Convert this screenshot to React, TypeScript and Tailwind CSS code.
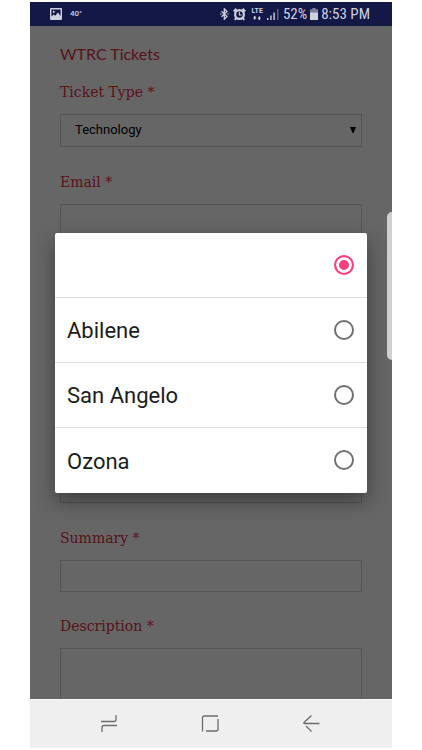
import { useState } from "react";
import type { ReactNode } from "react";

const LOCATIONS = ["", "Abilene", "San Angelo", "Ozona"];

const controlClass =
  "block w-full rounded-none border border-[#d4d4d4] bg-white outline-none";

interface FieldProps {
  id: string;
  label: string;
  className?: string;
  children: ReactNode;
}

function Field({ id, label, className, children }: FieldProps) {
  return (
    <div className={className}>
      <label
        htmlFor={id}
        className="mb-3 block font-['DejaVu_Serif',serif] text-sm leading-5 text-[#dc3048]"
      >
        {label} <span className="text-[#f02840]">*</span>
      </label>
      {children}
    </div>
  );
}

function PictureIcon() {
  return (
    <svg width="12" height="12" viewBox="0 0 12 12" aria-hidden="true">
      <path
        fillRule="evenodd"
        fill="currentColor"
        d="M1 0h10a1 1 0 0 1 1 1v10a1 1 0 0 1-1 1H1a1 1 0 0 1-1-1V1a1 1 0 0 1 1-1ZM1.4 1.4v7.2L3.6 6.4l1.7 1.4 2.6-3.3 2.7 3.5V1.4Z"
      />
      <circle cx="3.8" cy="3.8" r="1.1" fill="currentColor" />
    </svg>
  );
}

function BluetoothIcon() {
  return (
    <svg width="9" height="12" viewBox="0 0 9 12" fill="none" aria-hidden="true">
      <path
        d="M1.5 3.3 7 8.5 4.3 11.2V.8L7 3.5 1.5 8.7"
        stroke="currentColor"
        strokeWidth="1.3"
      />
      <path d="M0 6h1.5M7.4 6h1.4" stroke="currentColor" strokeWidth="1.2" />
    </svg>
  );
}

function AlarmIcon() {
  return (
    <svg width="13" height="13" viewBox="0 0 13 13" fill="none" aria-hidden="true">
      <circle cx="6.5" cy="6.5" r="4.4" stroke="currentColor" strokeWidth="2.2" />
      <path
        d="M.7 3.4 3.4.8M12.3 3.4 9.6.8M3.2 10.2 1.8 12M9.8 10.2l1.4 1.8"
        stroke="currentColor"
        strokeWidth="2"
      />
      <path d="M6.4 4v3h2.2" stroke="currentColor" strokeWidth="1.1" />
    </svg>
  );
}

function DataArrowsIcon() {
  return (
    <svg width="8" height="4" viewBox="0 0 8 4" fill="currentColor" aria-hidden="true">
      <path d="M0 1.4h1V0h1.4v1.4h1L1.7 4ZM4.6 2.6h1V4H7V2.6h1L6.3 0Z" />
    </svg>
  );
}

function SignalIcon() {
  return (
    <svg width="12" height="11" viewBox="0 0 12 11" fill="currentColor" aria-hidden="true">
      <path d="M0 9h1.4v2H0ZM3.2 6.5h1.4V11H3.2ZM6.4 3.5h1.4V11H6.4Z" />
      <path d="M10 0h1.4v11H10Z" opacity=".4" />
    </svg>
  );
}

function BatteryIcon() {
  return (
    <svg width="8" height="12" viewBox="0 0 8 12" fill="currentColor" aria-hidden="true">
      <path d="M2.3 0h3.4v1.3H8V5H0V1.3h2.3Z" opacity=".55" />
      <path d="M0 4.6h8V12H0Z" />
    </svg>
  );
}

function StatusBar() {
  return (
    <header className="flex h-6 items-center justify-between bg-[#141846] pr-[22px] pl-5 font-[Roboto,sans-serif] text-[#cfd1e0]">
      <div className="flex items-center gap-2">
        <PictureIcon />
        <span className="text-[8px] leading-3 font-medium">40°</span>
      </div>
      <div className="flex items-center gap-1">
        <BluetoothIcon />
        <AlarmIcon />
        <div className="ml-0.5 flex flex-col items-center gap-px">
          <span className="text-[7px] leading-[7px] font-bold">LTE</span>
          <DataArrowsIcon />
        </div>
        <SignalIcon />
        <div className="flex items-center gap-[3px] font-['Roboto_Condensed',Roboto,sans-serif] text-[15px] leading-5">
          <span>52%</span>
          <BatteryIcon />
          <span>8:53 PM</span>
        </div>
      </div>
    </header>
  );
}

function TicketForm() {
  return (
    <form className="flex flex-1 flex-col px-[30px] pt-4">
      <h1 className="mb-4 font-[Lato,sans-serif] text-base leading-6 text-[#dc3048]">
        WTRC Tickets
      </h1>
      <Field id="ticket-type" label="Ticket Type" className="mb-[25px]">
        <div className="relative">
          <select
            id="ticket-type"
            className={`${controlClass} h-[33px] appearance-none px-[14px] pb-0.5 font-[Roboto,sans-serif] text-[13px] text-black`}
          >
            <option>Technology</option>
          </select>
          <svg
            className="pointer-events-none absolute top-3 right-1.5"
            width="6"
            height="7"
            viewBox="0 0 6 7"
            aria-hidden="true"
          >
            <path d="M0 1h6L3.5 7h-1Z" />
          </svg>
        </div>
      </Field>
      <Field id="email" label="Email">
        <input id="email" type="email" className={`${controlClass} h-[33px] px-3`} />
      </Field>
      <select
        aria-label="Location"
        className={`${controlClass} mt-[233px] mb-[25px] h-[33px] appearance-none px-3`}
      >
        {LOCATIONS.map((name) => (
          <option key={name}>{name}</option>
        ))}
      </select>
      <Field id="summary" label="Summary" className="mb-6">
        <input id="summary" type="text" className={`${controlClass} h-8 px-3`} />
      </Field>
      <Field id="description" label="Description" className="flex flex-1 flex-col">
        <textarea
          id="description"
          className={`${controlClass} min-h-12 flex-1 resize-none border-b-0 px-3`}
        />
      </Field>
    </form>
  );
}

function LocationDialog() {
  const [selected, setSelected] = useState("");

  return (
    <div className="absolute inset-0 flex items-center bg-black/60 px-[25px]">
      <div
        role="dialog"
        aria-modal="true"
        aria-label="Location"
        className="w-full divide-y divide-[#dedede] rounded-xs bg-white shadow-[0_8px_20px_rgba(0,0,0,0.4)]"
      >
        {LOCATIONS.map((name) => (
          <label
            key={name}
            className="flex h-[65px] items-center justify-between px-3 pr-[13px] font-[Roboto,sans-serif] text-[22px] leading-7 text-[#1c1c1c]"
          >
            <span className="pt-[3px]">{name}</span>
            <input
              type="radio"
              name="location"
              aria-label={name || "None"}
              checked={selected === name}
              onChange={() => setSelected(name)}
              className="size-5 appearance-none rounded-full border-2 border-[#707070] bg-white checked:border-[#f93f7c] checked:bg-[#f93f7c] checked:shadow-[inset_0_0_0_3px_white]"
            />
          </label>
        ))}
      </div>
      <div className="absolute top-[186px] right-0 h-[148px] w-[5px] rounded-l-[5px] bg-[#d0d0d0]" />
    </div>
  );
}

function NavigationBar() {
  return (
    <nav className="flex h-[49px] items-center justify-center gap-[77px] border-t border-[#f8f8f8] bg-[#efefef] pr-0.5 pb-0.5 text-[#6c6c6c]">
      <button type="button" aria-label="Recent apps">
        <svg width="24" height="24" viewBox="0 0 24 24" fill="none" stroke="currentColor" strokeWidth="1.3">
          <path d="M4 10.5h13a2 2 0 0 0 2-2V4M20 14.5H7a2 2 0 0 0-2 2V21" />
        </svg>
      </button>
      <button type="button" aria-label="Home">
        <svg width="24" height="24" viewBox="0 0 24 24" fill="none" stroke="currentColor" strokeWidth="1.3">
          <path d="M4.5 20.5V7a2 2 0 0 1 2-2H20M8 20h10a2 2 0 0 0 2-2V8" />
        </svg>
      </button>
      <button type="button" aria-label="Back">
        <svg width="24" height="24" viewBox="0 0 24 24" fill="none" stroke="currentColor" strokeWidth="1.3">
          <path d="M20.5 12.5H5.5a.6.6 0 0 1-.5-1L12.5 4.5M7 15l5.5 5.5" />
        </svg>
      </button>
    </nav>
  );
}

export default function App() {
  return (
    <div className="flex min-h-screen flex-col bg-white px-[30px] py-0.5">
      <StatusBar />
      <main className="relative flex flex-1 flex-col">
        <TicketForm />
        <LocationDialog />
      </main>
      <NavigationBar />
    </div>
  );
}
